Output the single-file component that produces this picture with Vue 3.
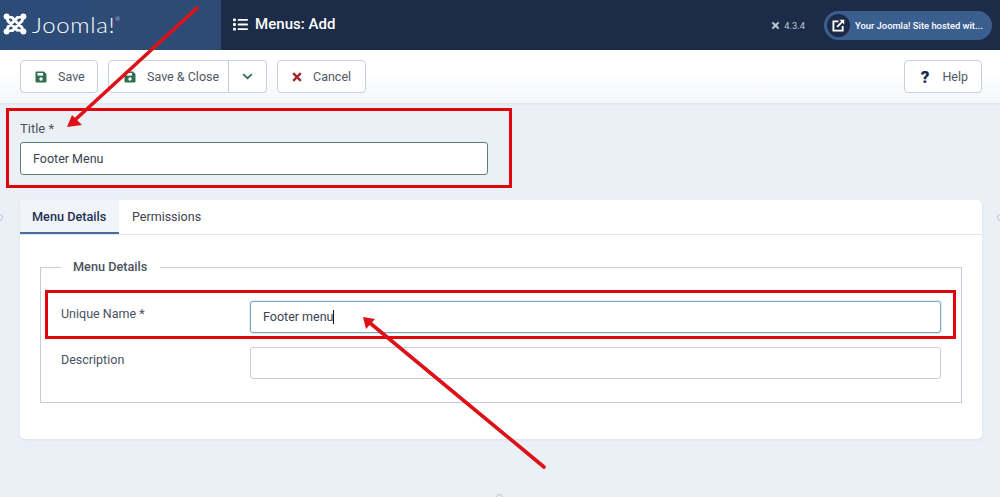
<script setup>
const version = '4.3.4'
</script>

<template>
  <div class="page">
    <header class="topbar">
      <div class="brand">
        <svg class="jlogo" viewBox="0 0 24 22" width="24" height="22" fill="none" stroke="#fff" stroke-linecap="round">
          <path d="M5 8 L14 17 M9 4.5 L19 14.5 M5 14 L14.5 4.5 M9.5 17.5 L19 8" stroke-width="3"/>
          <circle cx="3.6" cy="3.6" r="3" fill="#fff" stroke="none"/>
          <circle cx="20.4" cy="3.6" r="3" fill="#fff" stroke="none"/>
          <circle cx="3.6" cy="18.4" r="3" fill="#fff" stroke="none"/>
          <circle cx="20.4" cy="18.4" r="3" fill="#fff" stroke="none"/>
          <path d="M4 4 L9 4.5 M4 4 L5 8 M20 4 L14.5 4.5 M20 4 L19 8 M4 18 L5 14 M4 18 L9.5 17.5 M20 18 L14 17 M20 18 L19 14.5" stroke-width="2.6"/>
        </svg>
        <span class="jword">Joomla!<sup>®</sup></span>
      </div>
      <div class="title-zone">
        <svg class="listicon" viewBox="0 0 16 14" width="15" height="13" fill="#fff">
          <rect x="0" y="0.5" width="3" height="3" rx="0.6"/><rect x="5" y="1" width="11" height="2" rx="0.5"/>
          <rect x="0" y="5.5" width="3" height="3" rx="0.6"/><rect x="5" y="6" width="11" height="2" rx="0.5"/>
          <rect x="0" y="10.5" width="3" height="3" rx="0.6"/><rect x="5" y="11" width="11" height="2" rx="0.5"/>
        </svg>
        <span class="pagetitle">Menus: Add</span>
      </div>
      <div class="topright">
        <span class="version">
          <svg viewBox="0 0 10 10" width="9" height="9" fill="none" stroke="#b9c3d0" stroke-width="2.2"><path d="M1.5 1.5 L8.5 8.5 M8.5 1.5 L1.5 8.5"/><rect x="3.5" y="3.5" width="3" height="3" stroke-width="1"/></svg>
          {{ version }}
        </span>
        <div class="pill">
          <span class="pillicon">
            <svg viewBox="0 0 14 14" width="13" height="13" fill="none" stroke="#fff" stroke-width="2">
              <path d="M7 2.5 H1.5 V12.5 H11.5 V7.5"/>
              <path d="M5.5 8.5 L12 2"/>
              <path d="M8 0.8 H13.2 V6 Z" fill="#fff" stroke="none"/>
            </svg>
          </span>
          <span class="pilltext">Your Joomla! Site hosted wit...</span>
        </div>
      </div>
    </header>

    <div class="toolbar">
      <button class="btn save">
        <svg class="ic" viewBox="0 0 12 12" width="12" height="12"><path fill="#2f7050" d="M1.5 0.5 H9 L11.5 3 V10.5 A1 1 0 0 1 10.5 11.5 H1.5 A1 1 0 0 1 0.5 10.5 V1.5 A1 1 0 0 1 1.5 0.5 Z"/><rect x="2.4" y="2" width="5.6" height="2.6" fill="#fff"/><circle cx="6" cy="8" r="1.7" fill="#fff"/></svg>
        Save
      </button>
      <div class="btngroup">
        <button class="btn joined">
          <svg class="ic" viewBox="0 0 12 12" width="12" height="12"><path fill="#2f7050" d="M1.5 0.5 H9 L11.5 3 V10.5 A1 1 0 0 1 10.5 11.5 H1.5 A1 1 0 0 1 0.5 10.5 V1.5 A1 1 0 0 1 1.5 0.5 Z"/><rect x="2.4" y="2" width="5.6" height="2.6" fill="#fff"/><circle cx="6" cy="8" r="1.7" fill="#fff"/></svg>
          Save &amp; Close
        </button>
        <button class="btn caret">
          <svg viewBox="0 0 12 8" width="11" height="7" fill="none" stroke="#2f7050" stroke-width="2"><path d="M1 1.2 L6 6 L11 1.2"/></svg>
        </button>
      </div>
      <button class="btn cancel">
        <svg class="ic" viewBox="0 0 10 10" width="10" height="10" fill="none" stroke="#a5262d" stroke-width="2.4"><path d="M1.2 1.2 L8.8 8.8 M8.8 1.2 L1.2 8.8"/></svg>
        Cancel
      </button>
      <button class="btn help"><span class="q">?</span> Help</button>
    </div>

    <main class="content">
      <div class="titlefield">
        <label class="tlabel">Title *</label>
        <input class="tinput" value="Footer Menu" readonly />
      </div>

      <section class="card">
        <nav class="tabs">
          <span class="tab active">Menu Details</span>
          <span class="tab">Permissions</span>
        </nav>
        <div class="cardbody">
          <fieldset class="fs">
            <legend>Menu Details</legend>
            <div class="row">
              <label>Unique Name *</label>
              <div class="fakeinput focus">Footer menu<i class="caretbar"></i></div>
            </div>
            <div class="row">
              <label>Description</label>
              <div class="fakeinput"></div>
            </div>
          </fieldset>
        </div>
      </section>
    </main>

    <i class="dot d1"></i><i class="dot d2"></i><i class="dot d3"></i>

    <svg class="overlay" viewBox="0 0 1000 497" width="1000" height="497" fill="none">
      <g stroke="#e0040b" stroke-width="3">
        <rect x="7.5" y="109.5" width="503" height="77"/>
        <rect x="46.5" y="291.5" width="908" height="46"/>
      </g>
      <g stroke="#dc1218" stroke-width="3.6" stroke-linecap="round">
        <path d="M197 8 L76 119"/>
        <path d="M544 467 L370 323"/>
      </g>
      <path fill="#dc1218" d="M67 127 L72 115 L82 125 Z"/>
      <path fill="#dc1218" d="M363 317 L375 319 L366 329 Z"/>
    </svg>
  </div>
</template>

<style>
html, body { margin: 0; background: #ebf0f7; }
</style>

<style scoped>
.page {
  position: relative;
  width: 1000px;
  height: 497px;
  overflow: hidden;
  background: #ebf0f7;
  font-family: Roboto, "Liberation Sans", sans-serif;
  color: #3b4450;
}
.topbar {
  height: 50px;
  display: flex;
  align-items: center;
  background: #1c2b47;
  color: #fff;
}
.brand {
  width: 221px;
  height: 100%;
  box-sizing: border-box;
  padding: 0 0 2px 3px;
  display: flex;
  align-items: center;
  gap: 5px;
  background: linear-gradient(90deg, #2c4c78, #2e4b74);
}
.jword {
  display: inline-block;
  font-family: Lato, sans-serif;
  font-weight: 300;
  font-size: 21px;
  letter-spacing: 0.6px;
  line-height: 1;
  transform: scaleX(1.14);
  transform-origin: left center;
}
.jword sup { font-size: 5px; vertical-align: 12px; line-height: 0; }
.title-zone {
  display: flex;
  align-items: center;
  gap: 7px;
  padding: 0 0 2px 12px;
  flex: 1;
}
.pagetitle { font-size: 15px; font-weight: 500; letter-spacing: 0.05px; }
.topright { display: flex; align-items: center; padding-right: 8px; }
.version {
  display: flex;
  align-items: center;
  gap: 4px;
  font-size: 9.4px;
  color: #c2cad5;
  margin-right: 19px;
}
.pill {
  width: 168px;
  height: 29px;
  box-sizing: border-box;
  border-radius: 15px;
  background: #3a5f8f;
  display: flex;
  align-items: center;
  padding-left: 3px;
  gap: 5px;
}
.pillicon {
  width: 23px;
  height: 23px;
  border-radius: 50%;
  background: #1c2b47;
  display: flex;
  align-items: center;
  justify-content: center;
}
.pilltext { font-size: 9.4px; font-weight: 500; color: #fff; white-space: nowrap; }
.toolbar {
  height: 53px;
  box-sizing: border-box;
  padding: 10px 18px 10px 20px;
  display: flex;
  align-items: flex-start;
  gap: 10px;
  background: linear-gradient(180deg, #ffffff 40%, #f4f6fa 100%);
  box-shadow: 0 1px 2px rgba(120, 135, 160, 0.15);
}
.btn {
  height: 33px;
  box-sizing: border-box;
  border: 1px solid #c6d0db;
  border-radius: 4px;
  background: #fff;
  font-family: inherit;
  font-size: 12.5px;
  color: #4f5761;
  padding: 0 13px 0 14px;
  display: inline-flex;
  align-items: center;
  gap: 11px;
}
.save { width: 78px; padding-right: 0; }
.btngroup { display: flex; }
.joined { width: 121px; border-radius: 4px 0 0 4px; padding: 0 0 0 15px; }
.caret { width: 38px; justify-content: center; border-radius: 0 4px 4px 0; border-left: 0; padding: 0; }
.cancel { width: 89px; padding-right: 0; }
.help { margin-left: auto; padding: 0 13px 0 16px; gap: 13px; }
.q { font-weight: 900; font-size: 17px; color: #1c2b47; }
.content { padding: 0 18px 0 20px; }
.titlefield { padding-top: 18px; }
.tlabel { display: block; font-size: 13px; line-height: 16px; margin-bottom: 5px; color: #49525e; }
.tinput {
  display: block;
  width: 468px;
  height: 33px;
  box-sizing: border-box;
  border: 1px solid #5f7f70;
  border-radius: 3px;
  background: #fff;
  padding: 0 12px;
  font-family: inherit;
  font-size: 12.5px;
  color: #3b4450;
  outline: none;
}
.card {
  margin-top: 25px;
  height: 239px;
  background: #fff;
  border-radius: 5px;
  box-shadow: 0 1px 3px rgba(130, 145, 170, 0.15);
}
.tabs {
  height: 35px;
  box-sizing: border-box;
  border-bottom: 1px solid #e1e5ea;
  display: flex;
}
.tab {
  padding: 0 13px;
  line-height: 33px;
  font-size: 12.5px;
  color: #3b4450;
}
.tab.active {
  width: 99px;
  height: 34px;
  box-sizing: border-box;
  padding: 0 0 0 12px;
  font-size: 12.7px;
  font-weight: 500;
  color: #1f3352;
  background: #f1f5f9;
  border-bottom: 2px solid #476c9d;
  border-top-left-radius: 5px;
}
.cardbody { padding: 22px 20px 0 20px; }
.fs {
  margin: 0;
  width: 100%;
  height: 146px;
  box-sizing: border-box;
  padding: 24px 20px 0 20px;
  border: 1px solid #c3ced8;
  min-width: 0;
}
.fs legend {
  padding: 0 13px 0 12px;
  font-size: 12.7px;
  font-weight: 500;
  line-height: 20px;
  color: #4b525b;
}
.row {
  display: grid;
  grid-template-columns: 189px 691px;
  height: 46px;
  font-size: 12.5px;
}
.row label { padding-top: 5px; color: #49525e; }
.fakeinput {
  height: 32px;
  box-sizing: border-box;
  border: 1px solid #c6d0db;
  border-radius: 3px;
  background: #fff;
  line-height: 30px;
  padding-left: 12px;
  color: #3b4450;
}
.fakeinput.focus { border-color: #7da6cc; box-shadow: 0 0 0 1px rgba(125, 166, 204, 0.25); }
.caretbar {
  display: inline-block;
  width: 1px;
  height: 14px;
  background: #111;
  vertical-align: -3px;
}
.dot {
  position: absolute;
  width: 7px;
  height: 7px;
  box-sizing: border-box;
  border: 1px solid #b9c0c9;
  border-radius: 50%;
}
.d1 { left: -4px; top: 214px; }
.d2 { right: -4px; top: 214px; }
.d3 { left: 496px; top: 494px; }
.overlay { position: absolute; left: 0; top: 0; pointer-events: none; }
</style>
